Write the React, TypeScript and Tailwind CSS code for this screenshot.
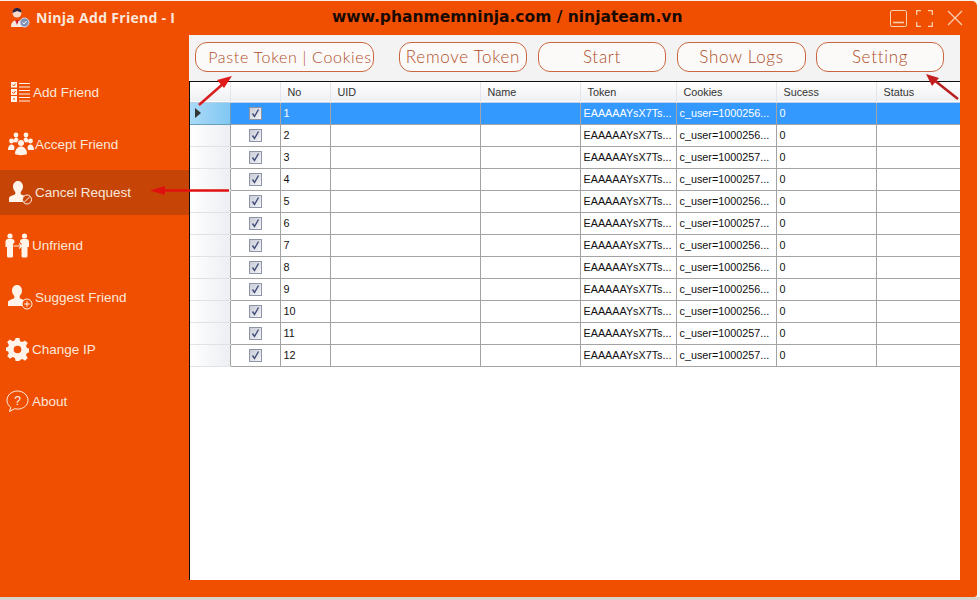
import React from 'react';

const rows = [
  { no: 1, cookie: 'c_user=1000256...' },
  { no: 2, cookie: 'c_user=1000256...' },
  { no: 3, cookie: 'c_user=1000257...' },
  { no: 4, cookie: 'c_user=1000257...' },
  { no: 5, cookie: 'c_user=1000256...' },
  { no: 6, cookie: 'c_user=1000257...' },
  { no: 7, cookie: 'c_user=1000256...' },
  { no: 8, cookie: 'c_user=1000256...' },
  { no: 9, cookie: 'c_user=1000256...' },
  { no: 10, cookie: 'c_user=1000256...' },
  { no: 11, cookie: 'c_user=1000257...' },
  { no: 12, cookie: 'c_user=1000257...' },
];

const buttons = [
  { label: 'Paste Token | Cookies', cls: 'w-[179px] pl-[11px] text-[16px]' },
  { label: 'Remove Token', cls: 'ml-[25px] w-[128px] text-[17px]' },
  { label: 'Start', cls: 'ml-[11px] w-[128px] text-[17px]' },
  { label: 'Show Logs', cls: 'ml-[11px] w-[129px] text-[17px]' },
  { label: 'Setting', cls: 'ml-[10px] w-[128px] text-[17px]' },
];

const Person = () => (
  <path
    d="M9 0c3.200 0 5 2.500 5 5.500 0 2.200-.8 4-2.300 5.500v2.200c2.500 1 5.300 1.700 6.300 3.500V21H0v-4.300c1-1.800 3.800-2.500 6.300-3.500V11C4.800 9.500 4 7.700 4 5.500 4 2.500 5.800 0 9 0z"
    fill="#fff3ea"
  />
);

function ListIcon() {
  return (
    <svg width="20" height="20" viewBox="0 0 20 20" fill="none">
      <rect x="0" y="0" width="6" height="5.500" fill="#fff3ea" />
      <rect x="0" y="7" width="6" height="6" fill="#fff3ea" />
      <rect x="0" y="14" width="6" height="6" fill="#fff3ea" />
      <path d="M1.200 2.500l1.500 1.500 2-2.500M1.200 10l1.500 1.500 2-2.500M2 17h2" stroke="#f04e00" strokeWidth="1" />
      <path d="M8 1.500h11M8 5h11M8 8.500h11M8 12h11M8 15.500h11M8 19h11" stroke="#fff3ea" strokeWidth="1.100" />
    </svg>
  );
}

function GroupIcon() {
  return (
    <svg width="26" height="24" viewBox="0 0 26 24" fill="#fff3ea">
      <circle cx="8" cy="3" r="2.400" />
      <circle cx="18" cy="3" r="2.400" />
      <circle cx="3.500" cy="9" r="2.400" />
      <circle cx="22.500" cy="9" r="2.400" />
      <circle cx="13" cy="11" r="3" />
      <path d="M0 18c0-4 2-5.500 3.500-5.500S6 13.500 6.500 15L6 18zM26 18c0-4-2-5.500-3.500-5.500S20 13.500 19.500 15l.5 3z" />
      <path d="M5 10c.5-3 2-4.500 3-4.500s2 .6 2.500 2L9 10.500zM21 10c-.5-3-2-4.500-3-4.500s-2 .6-2.500 2l1.500 3z" />
      <path d="M7 22c0-5 3-7.500 6-7.500s6 2.500 6 7.500c-2 1.500-10 1.500-12 0z" />
    </svg>
  );
}

function CancelIcon() {
  return (
    <svg width="24" height="24" viewBox="0 0 24 24" fill="none">
      <Person />
      <circle cx="18" cy="18.500" r="4.500" fill="#c54406" stroke="#fff3ea" strokeWidth="1" />
      <path d="M15 21.500l6-6" stroke="#fff3ea" strokeWidth="1" />
    </svg>
  );
}

function UnfriendIcon() {
  return (
    <svg width="25" height="25" viewBox="0 0 25 25" fill="#fff3ea">
      <circle cx="5" cy="3" r="2.600" />
      <circle cx="19.500" cy="3" r="2.600" />
      <path d="M0.500 9c0-2 1-3 2.500-3h4c1.500 0 2.500 1 2.500 2.500L9 10.500H8V23c0 1-.8 1.500-1.500 1.500h-3C2.800 24.500 2 24 2 23V14H0.500z" />
      <path d="M24 9c0-2-1-3-2.500-3h-4C16 6 15 7 15 8.500l.5 1.500h1v13c0 1 .8 1.500 1.500 1.500h3c.7 0 1.500-.5 1.500-1.500v-9H24z" />
      <path d="M8.500 13h8.500M14 10.500l3 2.500-3 2.500" stroke="#fff3ea" strokeWidth="1.100" fill="none" />
    </svg>
  );
}

function SuggestIcon() {
  return (
    <svg width="25" height="25" viewBox="0 0 25 25" fill="none">
      <Person />
      <circle cx="19" cy="19" r="5" fill="#f04e00" stroke="#fff3ea" strokeWidth="1" />
      <path d="M19 16.200v5.600M16.200 19h5.600" stroke="#fff3ea" strokeWidth="1" />
    </svg>
  );
}

function GearIcon() {
  return (
    <svg width="23" height="23" viewBox="0 0 24 24" fill="#fff3ea">
      <path
        fillRule="evenodd"
        d="M10 0h4l.7 3.300 2.300 1 2.900-1.800 2.800 2.800-1.800 2.900 1 2.300 3.100.5v4l-3.100.7-1 2.300 1.800 2.900-2.800 2.800-2.900-1.800-2.300 1L14 24h-4l-.7-3.100-2.300-1-2.900 1.800-2.800-2.800L3 16l-1-2.300L-1 13.500v-3.500l3-.5 1-2.300-1.800-2.900 2.800-2.800L7 3.300l2.300-1zM12 8a4 4 0 100 8 4 4 0 000-8z"
      />
    </svg>
  );
}

function HelpIcon() {
  return (
    <svg width="23" height="23" viewBox="0 0 23 23" fill="none" stroke="#fff3ea" strokeWidth="1">
      <path d="M11.500 1C5.700 1 1 5 1 10.300c0 3 1.500 5.400 3.800 7L3.500 21.500l5-2.700c1 .2 2 .3 3 .3 5.800 0 10.500-3.800 10.500-8.800S17.300 1 11.500 1z" />
      <text x="11.500" y="14.500" textAnchor="middle" fontSize="12" fill="#fff3ea" stroke="none" fontFamily="Liberation Sans, sans-serif">?</text>
    </svg>
  );
}

function Logo() {
  return (
    <svg width="22" height="22" viewBox="0 0 22 22">
      <circle cx="8" cy="6" r="4.500" fill="#f6d9c8" />
      <path d="M3.500 6C3.500 2 6 1 8 1s4.500 1 4.500 4.500L8 4z" fill="#2b2440" />
      <path d="M2 20c0-5 3-7 6-7s6 2 6 7z" fill="#f7e9e2" />
      <path d="M6 13l2 5 2-5z" fill="#d8232a" />
      <circle cx="15.500" cy="15.500" r="4.500" fill="#7f93b8" stroke="#d9dfe8" strokeWidth="1" />
      <path d="M13.500 15.500l1.500 1.500 2.500-3" stroke="#fff" fill="none" strokeWidth="1" />
    </svg>
  );
}

const navItems = [
  { label: 'Add Friend', icon: <ListIcon />, cls: 'h-[52px] pl-[11px] gap-[2px]' },
  { label: 'Accept Friend', icon: <GroupIcon />, cls: 'h-[52px] pl-[8px] gap-px' },
  { label: 'Cancel Request', icon: <CancelIcon />, cls: 'h-[45px] pl-[9px] gap-[2px] bg-[#c54406]' },
  { label: 'Unfriend', icon: <UnfriendIcon />, cls: 'mt-[4px] h-[52px] pl-[5px] gap-[2px]' },
  { label: 'Suggest Friend', icon: <SuggestIcon />, cls: 'h-[52px] pl-[8px] gap-[2px]' },
  { label: 'Change IP', icon: <GearIcon />, cls: 'h-[52px] pl-[6px] gap-[3px]' },
  { label: 'About', icon: <HelpIcon />, cls: 'h-[52px] pl-[6px] gap-[3px]' },
];

function CheckBox() {
  return (
    <div className="mx-auto flex h-[13px] w-[13px] items-center justify-center border border-[#8f95a8] bg-gradient-to-br from-[#c9ccd6] to-[#f3f4f7]">
      <svg width="9" height="9" viewBox="0 0 9 9" fill="none">
        <path d="M1.500 4.500l2 3L7.500 0.500" stroke="#3f4a78" strokeWidth="1.400" />
      </svg>
    </div>
  );
}

const headCell = 'border-r border-[#e3e5e9] px-[7px] text-left font-normal';
const bodyCell = 'overflow-hidden whitespace-nowrap border-r border-b border-[#a3a3a3] px-[3px]';

export default function App() {
  return (
    <div className="relative h-[600px] w-[980px] overflow-hidden bg-[#f7f2ec]">
      <div className="absolute bottom-0 left-0 h-[3px] w-[980px] bg-[#dcd2cc]" />
      <div className="relative mt-px flex h-[596px] w-[977px] flex-col rounded-tr-[5px] rounded-br-[3px] bg-[#f04e00]">
        {/* title bar */}
        <div className="flex h-[34px] items-center">
          <div className="ml-[9px] w-[27px]">
            <Logo />
          </div>
          <div className="w-[296px] font-['Open_Sans',sans-serif] text-[14px] font-bold leading-none tracking-[0.3px] text-[#fbe8dc]">
            Ninja Add Friend - I
          </div>
          <div className="w-[350px] whitespace-nowrap font-['DejaVu_Sans',sans-serif] text-[15.500px] font-bold leading-none text-[#180a02]">
            www.phanmemninja.com / ninjateam.vn
          </div>
          <div className="ml-[208px] flex items-center">
            <svg width="17" height="17" viewBox="0 0 17 17" fill="none" stroke="#f9cfae" strokeWidth="1">
              <rect x="0.500" y="0.500" width="16" height="16" rx="1.500" />
              <path d="M3 12.500h11" strokeWidth="1.600" />
            </svg>
            <svg className="ml-[9px]" width="17" height="17" viewBox="0 0 17 17" fill="none" stroke="#f9cfae" strokeWidth="1.300">
              <path d="M0.700 5V0.700H5M12 0.700h4.300V5M16.300 12v4.300H12M5 16.300H0.700V12" />
            </svg>
            <svg className="ml-[14px]" width="16" height="16" viewBox="0 0 16 16" fill="none" stroke="#f9cfae" strokeWidth="1.300">
              <path d="M1 1l14 14M15 1L1 15" />
            </svg>
          </div>
        </div>

        <div className="flex h-[545px]">
          {/* sidebar */}
          <div className="flex w-[189px] shrink-0 flex-col pt-[31px] font-['Liberation_Sans',sans-serif] text-[13.500px] text-[#fbe8dc]">
            {navItems.map((item) => (
              <div key={item.label} className={`flex items-center ${item.cls}`}>
                {item.icon}
                <span className="mt-[2px]">{item.label}</span>
              </div>
            ))}
          </div>

          {/* main panel */}
          <div className="flex w-[771px] flex-col bg-white">
            <div className="flex h-[46px] shrink-0 items-start bg-[#f3f3f3] pl-[6px] pt-[7px] font-['Lato',sans-serif]">
              {buttons.map((b) => (
                <div
                  key={b.label}
                  className={`flex h-[30px] items-center justify-center rounded-[12px] border border-[#c8673f] bg-[#fbfaf9] font-light tracking-[0.7px] text-[#b04e28] ${b.cls}`}
                >
                  {b.label}
                </div>
              ))}
            </div>
            <div className="flex-1 border-l border-t border-[#101010] font-['Liberation_Sans',sans-serif] text-[10.800px] text-[#111]">
              <table className="w-[770px] table-fixed border-collapse">
                <colgroup>
                  <col className="w-[40px]" />
                  <col className="w-[50px]" />
                  <col className="w-[50px]" />
                  <col className="w-[150px]" />
                  <col className="w-[100px]" />
                  <col className="w-[96px]" />
                  <col className="w-[100px]" />
                  <col className="w-[100px]" />
                  <col className="w-[84px]" />
                </colgroup>
                <thead>
                  <tr className="h-[20px] border-b border-[#bcd0e4] bg-gradient-to-b from-white to-[#eff0f2] text-[#333]">
                    <th className={headCell} />
                    <th className={headCell} />
                    <th className={headCell}>No</th>
                    <th className={headCell}>UID</th>
                    <th className={headCell}>Name</th>
                    <th className={headCell}>Token</th>
                    <th className={headCell}>Cookies</th>
                    <th className={headCell}>Sucess</th>
                    <th className="px-[7px] text-left font-normal">Status</th>
                  </tr>
                </thead>
                <tbody>
                  {rows.map((row, i) => {
                    const selected = i === 0;
                    return (
                      <tr key={row.no} className={`h-[22px] ${selected ? 'bg-[#3399ff] text-white' : 'bg-white'}`}>
                        <td
                          className={`border-r border-b p-0 ${
                            selected
                              ? 'border-[#6d9fbd] bg-gradient-to-r from-[#a9daf7] to-[#80c7f2]'
                              : 'border-r-[#a3a3a3] border-b-[#dfe2e7] bg-gradient-to-r from-white to-[#eceef2]'
                          }`}
                        >
                          {selected && (
                            <svg className="ml-[5px]" width="7" height="10" viewBox="0 0 7 10">
                              <path d="M0 0l6 5-6 5z" fill="#333" />
                            </svg>
                          )}
                        </td>
                        <td className={bodyCell}>
                          <CheckBox />
                        </td>
                        <td className={bodyCell}>{row.no}</td>
                        <td className={bodyCell} />
                        <td className={bodyCell} />
                        <td className={bodyCell}>EAAAAAYsX7Ts...</td>
                        <td className={bodyCell}>{row.cookie}</td>
                        <td className={bodyCell}>0</td>
                        <td className="border-b border-[#a3a3a3]" />
                      </tr>
                    );
                  })}
                </tbody>
              </table>
            </div>
          </div>
        </div>
      </div>

      {/* red annotation arrows */}
      <svg className="pointer-events-none absolute left-0 top-0" width="980" height="600" fill="#e01b1b">
        <path d="M199 105L224 83" stroke="#d81e1e" strokeWidth="2.500" />
        <path d="M232 76l-15 4 7 8z" />
        <path d="M958 99L934 80" stroke="#b82020" strokeWidth="2.500" />
        <path d="M926 74l6 12 7-8z" fill="#c41e1e" />
        <path d="M229 190.500H162" stroke="#e01010" strokeWidth="2.500" />
        <path d="M150 190.500l15-4.500v9z" fill="#e01010" />
      </svg>
    </div>
  );
}
